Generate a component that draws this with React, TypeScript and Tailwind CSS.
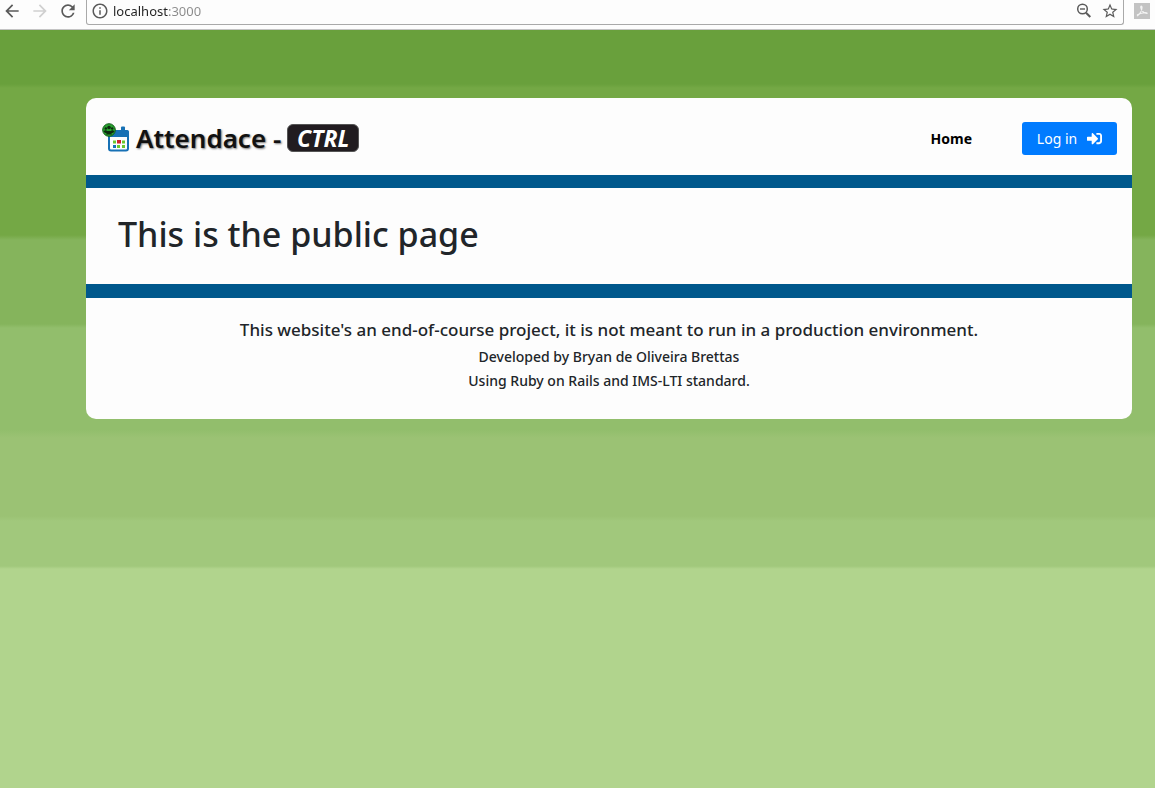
import { FaSignInAlt } from "react-icons/fa";
import {
  MdArrowBack,
  MdArrowForward,
  MdInfoOutline,
  MdRefresh,
  MdStarBorder,
} from "react-icons/md";

function ZoomOutIcon() {
  return (
    <svg width="18" height="18" viewBox="0 0 18 18" fill="none" stroke="currentColor" aria-hidden="true">
      <circle cx="7.500" cy="7" r="4.800" strokeWidth="1.500" />
      <path d="M5 7h5" strokeWidth="1.400" />
      <path d="M11 10.700l4.300 4.300" strokeWidth="2" />
    </svg>
  );
}

function BrowserBar() {
  return (
    <div className="flex h-[30px] items-start border-b border-[#c4c4c4] bg-[#fdfdfd] text-[#5a5a5a]">
      <div className="flex w-[86px] shrink-0 items-center gap-2 pt-px pl-[2px]">
        <button type="button" aria-label="Back">
          <MdArrowBack size={20} />
        </button>
        <button type="button" aria-label="Forward" className="text-[#d0d0d0]">
          <MdArrowForward size={20} />
        </button>
        <button type="button" aria-label="Reload">
          <MdRefresh size={20} />
        </button>
      </div>
      <div className="flex h-[25px] min-w-0 flex-1 items-start rounded-b-[3px] border border-t-0 border-[#a9a9a9] pt-[2px] pr-1 pl-1">
        <MdInfoOutline size={18} className="shrink-0" />
        <input
          type="text"
          aria-label="Address"
          defaultValue="localhost:3000"
          className="ml-1 h-[18px] min-w-0 flex-1 bg-[linear-gradient(90deg,#222222_55px,#8a8a8a_55px)] bg-clip-text text-[13px] leading-[18px] text-transparent caret-black outline-none"
        />
        <div className="flex gap-2">
          <button type="button" aria-label="Zoom">
            <ZoomOutIcon />
          </button>
          <button type="button" aria-label="Bookmark this page">
            <MdStarBorder size={18} />
          </button>
        </div>
      </div>
      <button type="button" aria-label="PDF extension" className="mt-[3px] mr-[5px] ml-[10px]">
        <svg width="16" height="16" viewBox="0 0 16 16" fill="none">
          <rect width="16" height="16" fill="#c3c3c3" />
          <path
            d="M3 13C6 11 8 7 8 4.500C8 2.500 6.500 2.500 6.800 4.500C7.200 7.500 10 10.500 13 10.500C14 9.500 8 9 3 12"
            stroke="#f4f4f4"
            strokeWidth="1.200"
          />
        </svg>
      </button>
    </div>
  );
}

function CalendarLogo() {
  return (
    <svg width="28" height="30" viewBox="0 0 28 30" aria-hidden="true" className="shrink-0">
      <rect x="19" y="3.500" width="4" height="6" rx="1" fill="#1771b5" />
      <rect x="7" y="8" width="19" height="19.500" rx="2" fill="#fdfdfd" stroke="#1771b5" strokeWidth="2" />
      <path d="M6 9a2 2 0 0 1 2-2h17a2 2 0 0 1 2 2v5H6z" fill="#1771b5" />
      <g fill="#6cc72c">
        <rect x="11" y="22" width="3" height="3" fill="#1771b5" />
        <rect x="15" y="22" width="3" height="3" />
        <rect x="20" y="22" width="3" height="3" />
        <rect x="11" y="17.500" width="3" height="3" />
        <rect x="15" y="17" width="4" height="3.500" fill="#d3202a" />
        <rect x="20" y="17.500" width="3" height="3" />
      </g>
      <circle cx="7" cy="7" r="6.300" fill="#27a22e" stroke="#155c1b" />
      <g fill="#0c2b0e">
        <circle cx="3.800" cy="5.500" r="1.200" />
        <circle cx="10.200" cy="5.500" r="1.200" />
        <circle cx="7" cy="4.500" r="1.800" />
        <path d="M1.800 9c0-2 2.500-2.500 3.500-1h3.400c1-1.500 3.500-1 3.500 1l-1.700 1H3.500z" />
        <path d="M4 11.500c.3-3 5.700-3 6 0z" />
      </g>
    </svg>
  );
}

export default function App() {
  return (
    <div className="flex min-h-screen flex-col bg-[#fdfdfd] font-['Noto_Sans',sans-serif] text-[#212529]">
      <BrowserBar />
      <div className="flex-1 bg-[linear-gradient(180deg,#69a03c_54px,#74a845_58px,#74a845_205px,#85b45c_210px,#85b45c_294px,#92be6c_298px,#92be6c_400px,#9bc274_408px,#9bc274_486px,#a1c87c_491px,#a1c87c_536px,#b1d48d_539px)] pt-[68px] pr-[23px] pb-8 pl-[86px]">
        <div className="overflow-hidden rounded-[10px] bg-[#fdfdfd]">
          <header className="flex h-[77px] items-center justify-between pr-[15px] pl-4">
            <a href="#home" className="flex items-center pt-[2px] text-[#111111]">
              <CalendarLogo />
              <span className="ml-[6px] text-[26px] leading-8 font-semibold whitespace-nowrap [text-shadow:1px_1px_2px_#777777]">
                Attendace -
              </span>
              <span className="ml-[6px] flex h-7 w-[72px] items-center justify-center rounded-[6px] border border-[#555555] bg-[#211c20] font-['Liberation_Sans_Narrow','Open_Sans',sans-serif] text-[23px] leading-7 font-bold text-white italic">
                CTRL
              </span>
            </a>
            <nav className="flex items-center gap-[50px] pt-1 text-sm">
              <a href="#home" className="font-bold text-black">
                Home
              </a>
              <button
                type="button"
                className="flex h-[33px] w-[95px] items-center justify-center gap-[10px] rounded-[3px] bg-[#007bff] text-white"
              >
                Log in
                <FaSignInAlt size={15} />
              </button>
            </nav>
          </header>
          <main className="border-t-[13px] border-b-[14px] border-[#00588c] px-8 pt-6 pb-7">
            <h1 className="text-[34px] leading-[44px] font-medium">This is the public page</h1>
          </main>
          <footer className="flex flex-col items-center px-4 pt-5 pb-[26px] text-center text-sm leading-6 font-medium">
            <p className="pb-[3px] text-[17px] leading-6">
              This website's an end-of-course project, it is not meant to run in a production environment.
            </p>
            <p>Developed by Bryan de Oliveira Brettas</p>
            <p>Using Ruby on Rails and IMS-LTI standard.</p>
          </footer>
        </div>
      </div>
    </div>
  );
}
